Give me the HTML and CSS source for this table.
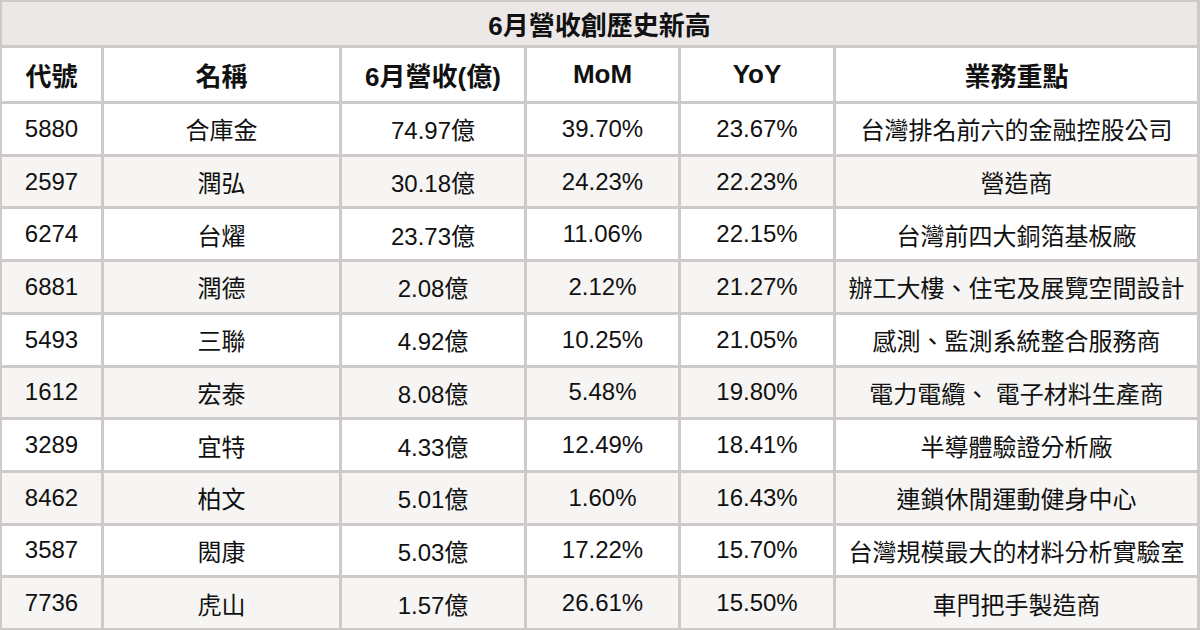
FILE: index.html
```html
<!DOCTYPE html>
<html lang="zh-Hant">
<head>
<meta charset="utf-8">
<title>6月營收創歷史新高</title>
<link rel="stylesheet" href="styles.css">
</head>
<body>
<div class="sheet">
  <div class="title">6月營收創歷史新高</div>

  <div class="row head">
    <div>代號</div><div>名稱</div><div>6月營收(億)</div><div>MoM</div><div>YoY</div><div>業務重點</div>
  </div>
  <div class="row">
    <div>5880</div><div>合庫金</div><div>74.97億</div><div>39.70%</div><div>23.67%</div><div>台灣排名前六的金融控股公司</div>
  </div>
  <div class="row alt">
    <div>2597</div><div>潤弘</div><div>30.18億</div><div>24.23%</div><div>22.23%</div><div>營造商</div>
  </div>
  <div class="row">
    <div>6274</div><div>台燿</div><div>23.73億</div><div>11.06%</div><div>22.15%</div><div>台灣前四大銅箔基板廠</div>
  </div>
  <div class="row alt">
    <div>6881</div><div>潤德</div><div>2.08億</div><div>2.12%</div><div>21.27%</div><div>辦工大樓、住宅及展覽空間設計</div>
  </div>
  <div class="row">
    <div>5493</div><div>三聯</div><div>4.92億</div><div>10.25%</div><div>21.05%</div><div>感測、監測系統整合服務商</div>
  </div>
  <div class="row alt">
    <div>1612</div><div>宏泰</div><div>8.08億</div><div>5.48%</div><div>19.80%</div><div>電力電纜、 電子材料生產商</div>
  </div>
  <div class="row">
    <div>3289</div><div>宜特</div><div>4.33億</div><div>12.49%</div><div>18.41%</div><div>半導體驗證分析廠</div>
  </div>
  <div class="row alt">
    <div>8462</div><div>柏文</div><div>5.01億</div><div>1.60%</div><div>16.43%</div><div>連鎖休閒運動健身中心</div>
  </div>
  <div class="row">
    <div>3587</div><div>閎康</div><div>5.03億</div><div>17.22%</div><div>15.70%</div><div>台灣規模最大的材料分析實驗室</div>
  </div>
  <div class="row alt">
    <div>7736</div><div>虎山</div><div>1.57億</div><div>26.61%</div><div>15.50%</div><div>車門把手製造商</div>
  </div>
</div>
</body>
</html>
```

FILE: styles.css
```css
html, body {
  margin: 0;
  padding: 0;
  background: #ffffff;
}

.sheet {
  box-sizing: border-box;
  width: 1200px;
  height: 630px;
  display: grid;
  grid-template-columns: 99px 235px 182px 151px 152px 361px;
  grid-template-rows: 43px 53px repeat(10, 1fr);
  gap: 3px;
  padding: 2px 3px 2px 2px;
  background: #cfcaca;
  font-family: "Liberation Sans", Arial, "Noto Sans CJK TC", sans-serif;
  color: #111111;
}

.title {
  grid-column: 1 / -1;
  display: flex;
  align-items: center;
  justify-content: center;
  background: #ece8e7;
  font-size: 26px;
  font-weight: bold;
}

.row {
  display: contents;
}

.row > div {
  display: flex;
  align-items: center;
  justify-content: center;
  background: #ffffff;
  font-size: 24px;
  white-space: nowrap;
}

.row.alt > div {
  background: #f6f5f3;
}

.row.head > div {
  font-size: 26px;
  font-weight: bold;
}
```
